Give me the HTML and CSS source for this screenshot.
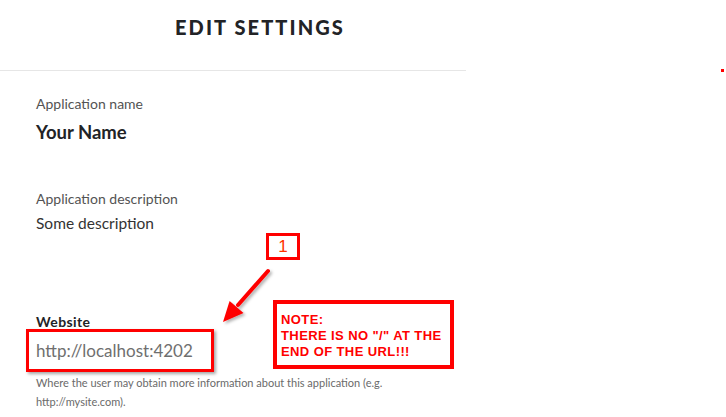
FILE: index.html
```html
<!DOCTYPE html>
<html>
<head>
<meta charset="utf-8">
<link rel="stylesheet" href="styles.css">
</head>
<body>
<div class="page">
  <section class="panel">
    <header class="panel-head">
      <h1 class="title">EDIT SETTINGS</h1>
    </header>
    <div class="form">
      <div class="field field-name">
        <div class="label">Application name</div>
        <div class="value-strong">Your Name</div>
      </div>
      <div class="field field-desc">
        <div class="label">Application description</div>
        <div class="value">Some description</div>
      </div>
      <div class="field field-site">
        <div class="label-strong">Website</div>
        <div class="url-box">http://localhost:4202</div>
        <p class="help">Where the user may obtain more information about this application (e.g. http://mysite.com).</p>
      </div>
    </div>
  </section>

  <div class="callout-num">1</div>
  <svg class="arrow" width="726" height="417" viewBox="0 0 726 417">
    <defs>
      <filter id="sh" x="-20%" y="-20%" width="150%" height="150%">
        <feDropShadow dx="2" dy="2" stdDeviation="1.5" flood-color="#000" flood-opacity="0.3"/>
      </filter>
    </defs>
    <g filter="url(#sh)">
      <line x1="268" y1="271" x2="238" y2="305" stroke="#ff0000" stroke-width="4" stroke-linecap="round"/>
      <polygon points="223,322 229.6,301 243.5,313" fill="#ff0000"/>
    </g>
  </svg>
  <div class="note">NOTE:<br>THERE IS NO "/" AT THE<br>END OF THE URL!!!</div>
  <span class="dot"></span>
</div>
</body>
</html>
```

FILE: styles.css
```css
html, body {
  margin: 0;
  padding: 0;
  background: #ffffff;
}

.page {
  position: relative;
  width: 726px;
  height: 417px;
  overflow: hidden;
  font-family: Lato, "Open Sans", Arial, sans-serif;
  color: #222326;
}

.panel {
  width: 466px;
}

.panel-head {
  height: 70px;
  border-bottom: 1px solid #e6e6e6;
  box-sizing: content-box;
  padding-left: 175px;
}

.title {
  margin: 0;
  padding-top: 13px;
  font-size: 20px;
  line-height: 28px;
  font-weight: 900;
  letter-spacing: 2.1px;
  color: #222326;
}

.form {
  padding-left: 36px;
}

.field-name {
  padding-top: 24px;
}

.field-desc {
  padding-top: 47px;
}

.field-site {
  padding-top: 81px;
}

.label {
  font-size: 14px;
  line-height: 18px;
  color: #535353;
}

.value-strong {
  margin-top: 8px;
  font-size: 18.5px;
  line-height: 22px;
  font-weight: 700;
  color: #222326;
}

.value {
  margin-top: 5px;
  font-size: 15.5px;
  line-height: 20px;
  color: #333;
}

.label-strong {
  font-size: 14px;
  line-height: 16px;
  font-weight: 700;
  letter-spacing: 0.4px;
  color: #222326;
}

.url-box {
  display: block;
  margin-left: -10px;
  margin-top: -1px;
  border: 3px solid #ff0000;
  padding: 8px 8px 8px 7px;
  width: 167px;
  font-size: 17px;
  line-height: 21px;
  color: #6f6f6f;
  box-shadow: 2px 2px 3px rgba(0, 0, 0, 0.35);
}

.help {
  margin: 1px 0 0;
  width: 400px;
  font-size: 11px;
  line-height: 19px;
  color: #6a6a6a;
}

.callout-num {
  position: absolute;
  left: 266px;
  top: 233px;
  width: 28px;
  height: 21px;
  border: 3px solid #ff0000;
  font-family: "Liberation Sans", Arial, sans-serif;
  font-size: 17px;
  line-height: 21px;
  text-align: center;
  color: #ff3300;
}

.arrow {
  position: absolute;
  left: 0;
  top: 0;
  pointer-events: none;
}

.note {
  position: absolute;
  left: 273px;
  top: 300px;
  width: 169px;
  height: 53px;
  border: 4px solid #ff0000;
  padding: 8px 0 0 4px;
  font-family: "Liberation Sans", Arial, sans-serif;
  font-weight: 700;
  font-size: 13px;
  line-height: 16px;
  letter-spacing: 0.4px;
  color: #ff0000;
}

.dot {
  position: absolute;
  left: 721px;
  top: 69px;
  width: 3px;
  height: 3px;
  background: #ff0000;
}
```
